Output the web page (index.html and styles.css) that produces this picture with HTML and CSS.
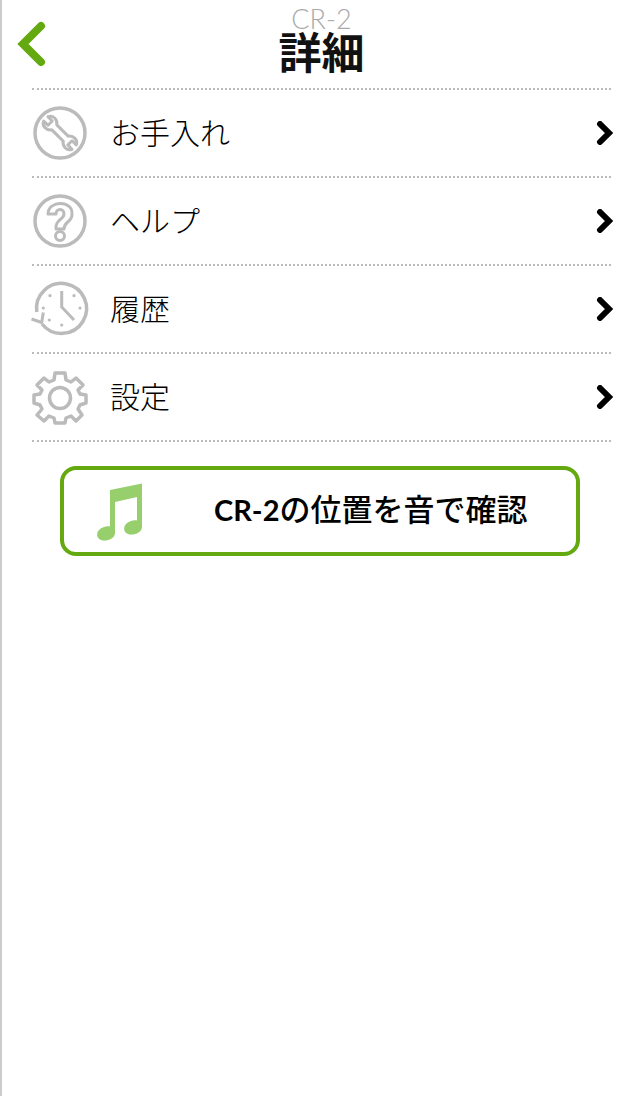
FILE: index.html
```html
<!DOCTYPE html>
<html lang="ja">
<head>
    <meta charset="UTF-8">
    <meta name="viewport" content="width=device-width, initial-scale=1.0">
    <title>詳細</title>
    <link rel="stylesheet" href="styles.css">
</head>
<body>
    <div class="page">
        <header class="header">
            <svg class="back" viewBox="0 0 30 46" width="30" height="46">
                <path d="M25 5 L7 23 L25 41" fill="none" stroke="#63a90f" stroke-width="8" stroke-linecap="round" stroke-linejoin="miter"/>
            </svg>
            <div class="heading">
                <div class="device">CR-2</div>
                <h1>詳細</h1>
            </div>
        </header>

        <ul class="menu">
            <li class="row">
                <svg class="icon" viewBox="0 0 56 56" width="56" height="56">
                    <circle cx="28" cy="28" r="25" fill="none" stroke="#bbb" stroke-width="3.5"/>
                    <path transform="translate(28 28) rotate(45)" d="M-20 -3 L-14 -3 L-14 3 L-20 3 C-18 8 -11 8 -8 3.5 L8 3.5 C11 8 18 8 20 3 L14 3 L14 -3 L20 -3 C18 -8 11 -8 8 -3.5 L-8 -3.5 C-11 -8 -18 -8 -20 -3 Z" fill="none" stroke="#bbb" stroke-width="3" stroke-linejoin="round"/>
                </svg>
                <span class="label">お手入れ</span>
                <svg class="arrow" viewBox="0 0 18 24" width="18" height="24"><path d="M4 3 L13 12 L4 21" fill="none" stroke="#000" stroke-width="6" stroke-linecap="round" stroke-linejoin="miter"/></svg>
            </li>
            <li class="row">
                <svg class="icon" viewBox="0 0 56 56" width="56" height="56">
                    <circle cx="28" cy="28" r="25" fill="none" stroke="#bbb" stroke-width="3.5"/>
                    <path d="M16 21 C16 7 41 7 40 21 C40 30 32 28 32 36 L24 36 C23 26 32 27 32 21 C32 15 24 15 24 21 Z" fill="none" stroke="#bbb" stroke-width="3" stroke-linejoin="round"/>
                    <circle cx="28" cy="43" r="4.5" fill="none" stroke="#bbb" stroke-width="3"/>
                </svg>
                <span class="label">ヘルプ</span>
                <svg class="arrow" viewBox="0 0 18 24" width="18" height="24"><path d="M4 3 L13 12 L4 21" fill="none" stroke="#000" stroke-width="6" stroke-linecap="round" stroke-linejoin="miter"/></svg>
            </li>
            <li class="row">
                <svg class="icon clock" viewBox="0 0 56 56" width="56" height="56">
                    <path d="M4.8 31 A25 25 0 1 1 10 43" fill="none" stroke="#bbb" stroke-width="3.5"/>
                    <path d="M-0.5 38 L9.7 41.5 L11.3 31.5" fill="none" stroke="#bbb" stroke-width="3" stroke-linejoin="round"/>
                    <path d="M29.7 10 L29.7 26 L42 39" fill="none" stroke="#bbb" stroke-width="3"/>
                    <g fill="#bbb">
                        <circle cx="18" cy="14.7" r="1.6"/><circle cx="42" cy="14.7" r="1.6"/>
                        <circle cx="11.3" cy="27" r="1.6"/><circle cx="48" cy="27" r="1.6"/>
                        <circle cx="17.3" cy="39" r="1.6"/><circle cx="29.7" cy="44" r="1.6"/>
                    </g>
                </svg>
                <span class="label">履歴</span>
                <svg class="arrow" viewBox="0 0 18 24" width="18" height="24"><path d="M4 3 L13 12 L4 21" fill="none" stroke="#000" stroke-width="6" stroke-linecap="round" stroke-linejoin="miter"/></svg>
            </li>
            <li class="row">
                <svg class="icon" viewBox="0 0 56 56" width="56" height="56">
                    <path d="M23 4 L33 4 L34 11 L39 13 L44 9 L51 16 L46 21 L48 25 L54 26 L54 34 L48 36 L46 40 L50 46 L44 52 L39 47 L34 49 L33 54 L23 54 L22 49 L17 47 L12 52 L5 46 L10 40 L8 36 L2 34 L2 26 L8 25 L10 21 L5 16 L12 9 L17 13 L22 11 Z" fill="none" stroke="#bbb" stroke-width="3.5" stroke-linejoin="round"/>
                    <circle cx="28" cy="29" r="10.5" fill="none" stroke="#bbb" stroke-width="3.5"/>
                </svg>
                <span class="label">設定</span>
                <svg class="arrow" viewBox="0 0 18 24" width="18" height="24"><path d="M4 3 L13 12 L4 21" fill="none" stroke="#000" stroke-width="6" stroke-linecap="round" stroke-linejoin="miter"/></svg>
            </li>
        </ul>

        <button class="locate">
            <svg class="note" viewBox="0 0 50 60" width="50" height="60">
                <path d="M14 9 L46 2.5 L46 46 C46 52 37 55 32 53 C25 50 28 41 37 39.5 C39 39 40 39 41 39.5 L41 16 L19 21 L19 52 C19 58 10 61 5 59 C-2 56 1 47 10 45.5 C12 45 13 45 14 45.5 Z" fill="#96cf6c"/>
            </svg>
            <span class="locate-text"><span class="latin">CR-2</span>の位置を音で確認</span>
        </button>
    </div>
</body>
</html>
```

FILE: styles.css
```css
body {
    margin: 0;
    background-color: white;
    font-family: 'Noto Sans CJK JP', 'Noto Sans', sans-serif;
    color: #111;
}

.page {
    min-height: 1096px;
    box-sizing: border-box;
    border-left: 2px solid #ccc;
    padding: 0 29px 0 30px;
}

.header {
    position: relative;
    height: 88px;
}

.back {
    position: absolute;
    left: -16px;
    top: 21px;
}

.heading {
    text-align: center;
}

.device {
    padding-top: 10px;
    line-height: 18px;
    font-family: 'Lato', sans-serif;
    font-size: 27px;
    font-weight: 300;
    color: #aaa;
}

h1 {
    margin: 0;
    font-size: 43px;
    line-height: 44px;
    font-weight: 700;
}

.menu {
    list-style: none;
    margin: 0;
    padding: 0;
}

.row {
    display: flex;
    align-items: center;
    height: 86px;
    border-top: 2px dotted #bbb;
}

.row:last-child {
    border-bottom: 2px dotted #bbb;
}

.icon {
    flex: none;
    margin-right: 22px;
}

.clock {
    overflow: visible;
}

.label {
    flex: 1;
    font-size: 30px;
    line-height: 36px;
    font-weight: 300;
    color: #000;
    padding-bottom: 4px;
}

.arrow {
    flex: none;
    margin-right: -3px;
}

.locate {
    display: flex;
    align-items: center;
    width: 520px;
    height: 90px;
    margin: 24px 0 0 28px;
    padding: 0 0 0 32px;
    box-sizing: border-box;
    background-color: white;
    border: 4px solid #63a90f;
    border-radius: 16px;
    font-family: 'Noto Sans CJK JP', sans-serif;
    font-size: 31px;
    font-weight: 500;
    color: #000;
}

.locate-text {
    line-height: 36px;
    padding-bottom: 4px;
    white-space: nowrap;
}

.latin {
    font-family: 'Lato', sans-serif;
    font-size: 29px;
    font-weight: 700;
}

.note {
    flex: none;
    margin-right: 68px;
}
```
